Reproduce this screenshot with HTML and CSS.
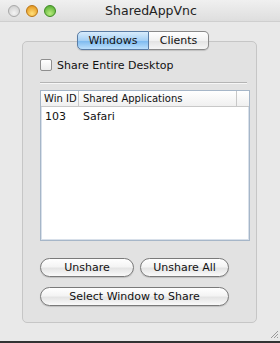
FILE: index.html
```html
<!DOCTYPE html>
<html>
<head>
<meta charset="utf-8">
<link rel="stylesheet" href="styles.css">
</head>
<body>
<div class="window">
  <div class="titlebar">
    <div class="lights">
      <span class="light grey"></span>
      <span class="light orange"></span>
      <span class="light green"></span>
    </div>
    <div class="title">SharedAppVnc</div>
  </div>
  <div class="content">
    <div class="group">
      <div class="tabs">
        <span class="tab selected">Windows</span><span class="tab">Clients</span>
      </div>
      <label class="check"><span class="box"></span>Share Entire Desktop</label>
      <div class="sep"></div>
      <div class="table">
        <div class="thead">
          <span class="c1">Win ID</span><span class="c2">Shared Applications</span><span class="c3"></span>
        </div>
        <div class="row">
          <span class="c1">103</span><span class="c2">Safari</span>
        </div>
      </div>
      <div class="buttons">
        <div class="btnrow">
          <span class="btn w1">Unshare</span><span class="btn w2">Unshare All</span>
        </div>
        <div class="btnrow">
          <span class="btn w3">Select Window to Share</span>
        </div>
      </div>
    </div>
    <div class="grip">
      <svg width="10" height="10" viewBox="0 0 10 10"><path d="M9 2 L2 9 M9 5 L5 9 M9 8 L8 9" stroke="#9a9a9a" stroke-width="1"/></svg>
    </div>
  </div>
  <div class="bottomline"></div>
</div>
</body>
</html>
```
FILE: styles.css
```css
html, body {
  margin: 0;
  padding: 0;
  background: #ffffff;
}
body {
  font-family: "DejaVu Sans", "Liberation Sans", sans-serif;
  font-size: 11px;
  color: #111;
  width: 280px;
  height: 343px;
  overflow: hidden;
}
.window {
  width: 280px;
  height: 343px;
  display: flex;
  flex-direction: column;
  background: #e9e9e9;
}
.titlebar {
  height: 22px;
  display: flex;
  align-items: center;
  background: linear-gradient(#f0f0f0, #dedede);
  border-bottom: 1px solid #cfcfcf;
  box-sizing: border-box;
}
.lights {
  display: flex;
  gap: 6px;
  padding-left: 8px;
}
.light {
  width: 12px;
  height: 12px;
  border-radius: 50%;
  box-sizing: border-box;
}
.light.grey {
  background: radial-gradient(circle at 50% 70%, #f4f4f4, #c8c8c8);
  border: 1px solid #a8a8a8;
}
.light.orange {
  background: radial-gradient(circle at 50% 75%, #ffe07a, #e08a10);
  border: 1px solid #b87414;
}
.light.green {
  background: radial-gradient(circle at 50% 75%, #b8ec7e, #4aa62a);
  border: 1px solid #3d8a22;
}
.title {
  flex: 1;
  text-align: center;
  font-size: 12.5px;
  color: #222;
  padding-right: 44px;
  padding-left: 10px;
}
.content {
  flex: 1;
  position: relative;
  padding: 19px 23px 0 22px;
}
.group {
  height: 282px;
  border: 1px solid #c6c6c6;
  border-radius: 5px;
  background: #e2e2e2;
  position: relative;
  box-sizing: border-box;
  padding: 0 5px 0 17px;
}
.tabs {
  position: absolute;
  top: -11px;
  left: 54px;
  display: flex;
  height: 19px;
  border-radius: 5px;
  box-shadow: 0 1px 1px rgba(0,0,0,0.15);
}
.tab {
  height: 19px;
  box-sizing: border-box;
  display: flex;
  align-items: center;
  justify-content: center;
  font-size: 11px;
  border: 1px solid #8a8a8a;
  background: linear-gradient(#ffffff 0%, #f2f2f2 50%, #e2e2e2 51%, #f6f6f6 100%);
  color: #111;
  white-space: nowrap;
}
.tab:first-child {
  width: 72px;
  border-radius: 5px 0 0 5px;
}
.tab:last-child {
  width: 60px;
  border-left: none;
  border-radius: 0 5px 5px 0;
}
.tab.selected {
  background: linear-gradient(#d8ecfc 0%, #a6d0f4 50%, #7ab8ee 51%, #bde0fc 100%);
  border-color: #5a7ca4;
}
.check {
  display: flex;
  align-items: center;
  margin-top: 16px;
  height: 14px;
  font-size: 11px;
  white-space: nowrap;
}
.box {
  width: 12px;
  height: 12px;
  box-sizing: border-box;
  border: 1px solid #8e8e8e;
  border-radius: 2px;
  background: linear-gradient(#ffffff, #ececec);
  margin-right: 5px;
}
.sep {
  margin-top: 10px;
  height: 1px;
  background: #b4b4b4;
  border-bottom: 1px solid #f6f6f6;
  margin-right: 4px;
}
.table {
  margin-top: 6px;
  height: 151px;
  width: 210px;
  box-sizing: border-box;
  border: 1px solid #a6b6c8;
  background: #fff;
  box-shadow: inset 0 0 0 1px #d8e0ea;
}
.thead {
  display: flex;
  height: 15px;
  border-bottom: 1px solid #c8c8c8;
  background: linear-gradient(#ffffff, #f0f0f0);
  font-size: 10px;
  align-items: center;
  white-space: nowrap;
}
.thead span {
  height: 15px;
  line-height: 15px;
  box-sizing: border-box;
}
.c1 { width: 38px; padding-left: 3px; box-sizing: border-box; white-space: nowrap; }
.c2 { width: 158px; padding-left: 4px; box-sizing: border-box; white-space: nowrap; }
.thead .c1, .thead .c2 { border-right: 1px solid #c8c8c8; }
.c3 { flex: 1; }
.row {
  display: flex;
  height: 18px;
  align-items: center;
  font-size: 11px;
}
.row .c1 { padding-left: 4px; }
.row .c2 { padding-left: 4px; }
.buttons {
  margin-top: 17px;
  display: flex;
  flex-direction: column;
  gap: 10px;
}
.btnrow {
  display: flex;
  gap: 6px;
}
.btn {
  height: 19px;
  box-sizing: border-box;
  border: 1px solid #7a7a7a;
  border-radius: 10px;
  display: flex;
  align-items: center;
  justify-content: center;
  font-size: 11px;
  white-space: nowrap;
  background: linear-gradient(#ffffff 0%, #f4f4f4 45%, #e4e4e4 55%, #fafafa 100%);
  box-shadow: 0 1px 1px rgba(0,0,0,0.15);
}
.w1 { width: 94px; }
.w2 { width: 89px; }
.w3 { width: 189px; }
.grip {
  position: absolute;
  right: 1px;
  bottom: 2px;
  width: 10px;
  height: 10px;
}
.bottomline {
  height: 2px;
  background: #333;
}
```
